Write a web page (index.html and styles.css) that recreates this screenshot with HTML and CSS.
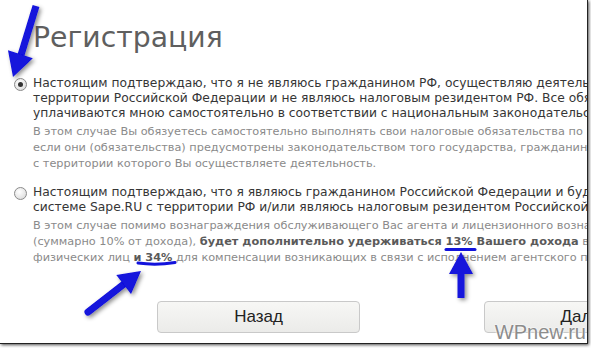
FILE: index.html
```html
<!DOCTYPE html>
<html lang="ru">
<head>
    <meta charset="UTF-8">
    <title>Регистрация</title>
    <link rel="stylesheet" href="styles.css">
</head>
<body>
    <div class="shot">
        <div class="page">
            <h1 class="title">Регистрация</h1>

            <div class="choice">
                <span class="radio checked"></span>
                <div class="choice-body">
                    <p class="lead">Настоящим подтверждаю, что я не являюсь гражданином РФ, осуществляю деятельность<br>территории Российской Федерации и не являюсь налоговым резидентом РФ. Все обязательства<br>уплачиваются мною самостоятельно в соответствии с национальным законодательством</p>
                    <p class="note">В этом случае Вы обязуетесь самостоятельно выполнять свои налоговые обязательства по правилам<br>если они (обязательства) предусмотрены законодательством того государства, гражданином которого<br>с территории которого Вы осуществляете деятельность.</p>
                </div>
            </div>

            <div class="choice second">
                <span class="radio"></span>
                <div class="choice-body">
                    <p class="lead">Настоящим подтверждаю, что я являюсь гражданином Российской Федерации и буду<br>системе Sape.RU с территории РФ и/или являюсь налоговым резидентом Российской Федерации</p>
                    <p class="note">В этом случае помимо вознаграждения обслуживающего Вас агента и лицензионного вознаграждения<br>(суммарно 10% от дохода), <b>будет дополнительно удерживаться 13% Вашего дохода</b> в качестве налога<br>физических лиц <b>и 34%</b> для компенсации возникающих в связи с исполнением агентского поручения</p>
                </div>
            </div>

            <div class="actions">
                <button class="btn">Назад</button>
                <button class="btn">Далее</button>
            </div>
        </div>

        <!-- annotation arrows drawn over the screenshot -->
        <svg class="marks" width="591" height="348" viewBox="0 0 591 348">
            <defs>
                <filter id="shade" x="-50%" y="-50%" width="200%" height="200%">
                    <feDropShadow dx="2" dy="2" stdDeviation="2" flood-color="#000" flood-opacity="0.45"/>
                </filter>
            </defs>
            <g fill="#1212dc" stroke="#1212dc" filter="url(#shade)">
                <line x1="36" y1="6" x2="21" y2="55" stroke-width="7"/>
                <polygon points="13,77 32.8,58.2 8,50.2" stroke="none"/>

                <line x1="88" y1="312" x2="124" y2="284" stroke-width="7" stroke-linecap="round"/>
                <polygon points="141,271 131,294 116.3,275" stroke="none"/>

                <line x1="461" y1="298" x2="461" y2="272" stroke-width="7"/>
                <polygon points="461,252 473,274 449,274" stroke="none"/>
            </g>
            <g fill="none" stroke="#1212dc" stroke-width="3" stroke-linecap="round">
                <path d="M138 263 Q156 265.5 175 262.5"/>
                <path d="M446 249.5 L475 249.5"/>
            </g>
        </svg>

        <span class="watermark">WPnew.ru</span>
    </div>
</body>
</html>
```

FILE: styles.css
```css
body {
    margin: 0;
    background: #fff;
    font-family: "DejaVu Sans", Verdana, sans-serif;
}

.shot {
    position: relative;
    width: 591px;
    height: 348px;
    overflow: hidden;
}

.page {
    box-sizing: border-box;
    width: 588px;
    height: 344px;
    padding-top: 20px;
    background: #fff;
    border-right: 1px solid #222;
    border-bottom: 1px solid #222;
    box-shadow: 1px 1px 3px rgba(0, 0, 0, 0.7);
    overflow: hidden;
}

.title {
    margin: 0 0 0 33px;
    font-size: 28.3px;
    font-weight: normal;
    line-height: 36px;
    color: #5f5f5f;
}

.choice {
    display: flex;
    align-items: flex-start;
    gap: 6px;
    padding-left: 14px;
    margin-top: 20px;
}

.choice.second {
    margin-top: 13px;
}

.radio {
    flex: none;
    box-sizing: border-box;
    width: 13px;
    height: 13px;
    margin-top: 2px;
    border: 1px solid #8a8a8a;
    border-radius: 50%;
    background: radial-gradient(circle at 40% 35%, #fff 0%, #e6e6e6 60%, #d2d2d2 100%);
    position: relative;
}

.radio.checked::after {
    content: "";
    position: absolute;
    left: 3px;
    top: 3px;
    width: 5px;
    height: 5px;
    border-radius: 50%;
    background: #333;
}

.lead {
    margin: 0;
    font-size: 12.3px;
    line-height: 15px;
    color: #363636;
    white-space: nowrap;
}

.note {
    margin: 3px 0 0;
    font-size: 11.3px;
    line-height: 16px;
    color: #8a8a8a;
    white-space: nowrap;
}

.note b {
    color: #5a5a5a;
}

.actions {
    display: flex;
    gap: 124px;
    padding-left: 157px;
    margin-top: 35px;
}

.btn {
    flex: none;
    width: 203px;
    height: 32px;
    border: 1px solid #c9c9c9;
    border-radius: 4px;
    background: linear-gradient(#f7f7f5, #ebebe9);
    font-family: "Liberation Sans", Arial, sans-serif;
    font-size: 17px;
    color: #222;
}

.marks {
    position: absolute;
    left: 0;
    top: 0;
}

.watermark {
    position: absolute;
    right: 5px;
    bottom: 4px;
    font-family: "Liberation Sans", Arial, sans-serif;
    font-size: 20px;
    color: #8c8c8c;
    text-shadow: 0 0 2px #fff, 0 0 2px #fff;
}
```
